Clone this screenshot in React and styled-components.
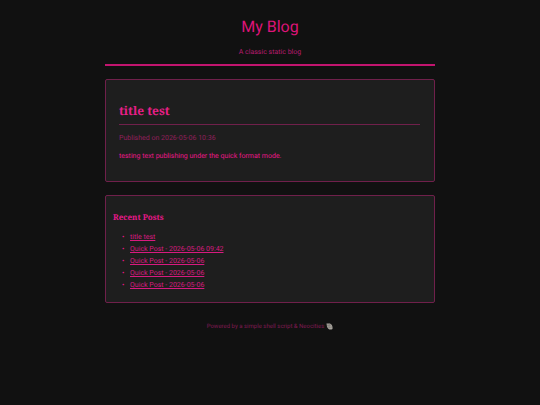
import React from 'react';
import styled, { createGlobalStyle } from 'styled-components';

const GlobalStyle = createGlobalStyle`
  * {
    box-sizing: border-box;
  }

  body {
    margin: 0;
    background: #111111;
    color: #ec1689;
    font-family: Roboto, "Liberation Sans", sans-serif;
    font-size: 7px;
    line-height: 11px;
    text-rendering: geometricPrecision;
  }
`;

const Page = styled.div`
  max-width: 346px;
  margin: 0 auto;
  padding: 15px 8px;
`;

const Header = styled.header`
  padding-bottom: 6px;
  border-bottom: 2px solid #c2156f;
  text-align: center;
`;

const SiteTitle = styled.h1`
  margin: 0 0 9px;
  color: #de1478;
  font-size: 16px;
  font-weight: 400;
  line-height: 23px;
`;

const Tagline = styled.p`
  margin: 0;
  color: #b81a70;
`;

const Card = styled.section`
  margin-top: 13px;
  padding: ${(props) => props.$padding};
  background: #1e1e1e;
  border: 1px solid #70204b;
  border-radius: 2px;
`;

const PostTitle = styled.h2`
  margin: 0 0 8px;
  padding-bottom: 4px;
  border-bottom: 1px solid #70204b;
  color: #e81e87;
  font-family: "Noto Serif", "Liberation Serif", serif;
  font-size: 12px;
  line-height: 18px;
`;

const PostDate = styled.p`
  margin: 0 0 7px;
  color: #921e5c;
`;

const PostText = styled.p`
  margin: 0;
`;

const RecentTitle = styled.h3`
  margin: 0 0 7px;
  color: #e8188a;
  font-family: "Noto Serif", "Liberation Serif", serif;
  font-size: 8px;
  line-height: 12px;
`;

const PostList = styled.ul`
  margin: 0;
  padding-left: 9px;
  list-style: none;
`;

const PostItem = styled.li`
  display: flex;
  line-height: 12px;

  &::before {
    content: '•';
    width: 8px;
  }
`;

const PostLink = styled.a`
  color: #d81a80;
  text-decoration: underline;
`;

const Footer = styled.footer`
  display: flex;
  align-items: center;
  justify-content: center;
  gap: 2px;
  margin-top: 18px;
  color: #801a52;
  font-size: 6px;
`;

const posts = [
  { id: 1, title: 'title test' },
  { id: 2, title: 'Quick Post - 2026-05-06 09:42' },
  { id: 3, title: 'Quick Post - 2026-05-06' },
  { id: 4, title: 'Quick Post - 2026-05-06' },
  { id: 5, title: 'Quick Post - 2026-05-06' },
];

function ShellIcon() {
  return (
    <svg width="7" height="7" viewBox="0 0 14 14" aria-hidden="true">
      <path d="M1 1 L8 1 Q13 3 13 8 L13 12 Q9 14 5 12 Q1 8 1 1Z" fill="#a8a49d" />
      <path d="M4 2 L4 8 M7 2 L6 11 M2 5 L11 4 M5 9 L12 8" stroke="#77726c" strokeWidth="1" fill="none" />
    </svg>
  );
}

function App() {
  return (
    <>
      <GlobalStyle />
      <Page>
        <Header>
          <SiteTitle>My Blog</SiteTitle>
          <Tagline>A classic static blog</Tagline>
        </Header>
        <main>
          <Card as="article" $padding="22px 14px 19px 13px">
            <PostTitle>title test</PostTitle>
            <PostDate>Published on 2026-05-06 10:36</PostDate>
            <PostText>testing text publishing under the quick format mode.</PostText>
          </Card>
          <Card $padding="16px 7px 11px">
            <RecentTitle>Recent Posts</RecentTitle>
            <PostList>
              {posts.map((post) => (
                <PostItem key={post.id}>
                  <PostLink href={`#post-${post.id}`}>{post.title}</PostLink>
                </PostItem>
              ))}
            </PostList>
          </Card>
        </main>
        <Footer>
          <span>Powered by a simple shell script &amp; Neocities</span>
          <ShellIcon />
        </Footer>
      </Page>
    </>
  );
}

export default App;
